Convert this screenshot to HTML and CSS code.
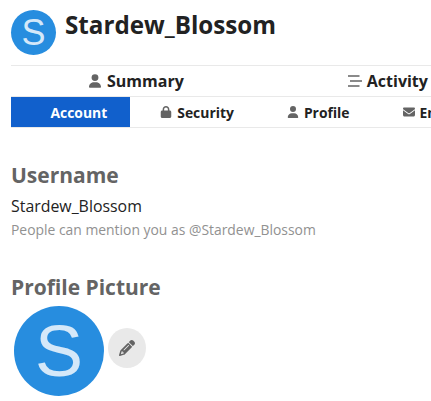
FILE: index.html
```
<!DOCTYPE html>
<html lang="en">
<head>
    <meta charset="UTF-8">
    <title>Stardew_Blossom - Account</title>
    <link rel="stylesheet" href="styles.css">
</head>
<body>
    <header class="user-header">
        <div class="avatar avatar-small"><span>S</span></div>
        <h1>Stardew_Blossom</h1>
    </header>
    <nav class="nav nav-primary">
        <a class="nav-item">
            <svg class="icon" viewBox="0 0 448 512"><path d="M224 256A128 128 0 1 0 224 0a128 128 0 1 0 0 256zm-45.700 48C79.800 304 0 383.800 0 482.300C0 498.700 13.300 512 29.700 512H418.300c16.400 0 29.700-13.300 29.700-29.700C448 383.800 368.200 304 269.700 304H178.300z"/></svg>
            <span>Summary</span>
        </a>
        <a class="nav-item">
            <svg class="icon icon-wide" viewBox="0 0 14 12"><path d="M0 .3h11.500v1.400H0zM2 5.300h12v1.400H2zM0 10.300h11.500v1.400H0z"/></svg>
            <span>Activity</span>
        </a>
    </nav>
    <nav class="nav nav-secondary">
        <a class="nav-item active">
            <svg class="icon" viewBox="0 0 448 512"></svg>
            <span>Account</span>
        </a>
        <a class="nav-item">
            <svg class="icon" viewBox="0 0 448 512"><path d="M144 144v48H304V144c0-44.200-35.800-80-80-80s-80 35.800-80 80zM80 192V144C80 64.500 144.500 0 224 0s144 64.500 144 144v48h16c35.300 0 64 28.700 64 64V448c0 35.300-28.700 64-64 64H64c-35.300 0-64-28.700-64-64V256c0-35.300 28.700-64 64-64H80z"/></svg>
            <span>Security</span>
        </a>
        <a class="nav-item">
            <svg class="icon" viewBox="0 0 448 512"><path d="M224 256A128 128 0 1 0 224 0a128 128 0 1 0 0 256zm-45.700 48C79.800 304 0 383.800 0 482.300C0 498.700 13.300 512 29.700 512H418.300c16.400 0 29.700-13.300 29.700-29.700C448 383.800 368.200 304 269.700 304H178.300z"/></svg>
            <span>Profile</span>
        </a>
        <a class="nav-item">
            <svg class="icon" viewBox="0 0 512 512"><path d="M48 64C21.500 64 0 85.500 0 112c0 15.100 7.100 29.300 19.200 38.400L236.800 313.600c11.400 8.500 27 8.500 38.400 0L492.800 150.400c12.100-9.100 19.200-23.300 19.200-38.400c0-26.500-21.500-48-48-48H48zM0 176V384c0 35.300 28.700 64 64 64H448c35.300 0 64-28.700 64-64V176L294.400 339.200c-22.800 17.100-54 17.100-76.800 0L0 176z"/></svg>
            <span>Emails</span>
        </a>
    </nav>
    <main class="preferences">
        <section class="username">
            <h2>Username</h2>
            <p class="value">Stardew_Blossom</p>
            <p class="hint">People can mention you as @Stardew_Blossom</p>
        </section>
        <section class="picture">
            <h2>Profile Picture</h2>
            <div class="picture-row">
                <div class="avatar avatar-large"><span>S</span></div>
                <button class="edit-button" aria-label="Edit">
                    <svg class="pencil" viewBox="0 0 512 512"><path d="M410.300 231l11.300-11.300-33.900-33.900-62.100-62.100L291.700 89.800l-11.300 11.300-22.600 22.600L58.600 322.900c-10.400 10.400-18 23.300-22.200 37.400L1 480.700c-2.500 8.400-.2 17.500 6.100 23.700s15.300 8.500 23.700 6.100l120.300-35.400c14.100-4.200 27-11.800 37.400-22.200L387.700 253.700 410.300 231zM160 399.400l-9.100 22.700c-4 3.100-8.500 5.400-13.300 6.900L59.400 452l23-78.100c1.400-4.900 3.800-9.400 6.900-13.300l22.700-9.100v32c0 8.800 7.200 16 16 16h32zM362.700 18.700L348.300 33.200 325.700 55.800 314.300 67.100l33.900 33.900 62.100 62.100 33.900 33.900 11.300-11.300 22.600-22.600 14.500-14.500c25-25 25-65.500 0-90.500L453.300 18.700c-25-25-65.500-25-90.500 0zm-47.400 168l-144 144c-6.200 6.200-16.400 6.200-22.600 0s-6.200-16.400 0-22.600l144-144c6.200-6.200 16.400-6.200 22.600 0s6.200 16.400 0 22.600z"/></svg>
                </button>
            </div>
        </section>
    </main>
</body>
</html>
```
FILE: styles.css
```
body {
    margin: 0;
    padding: 10px 0 0 11px;
    font-family: "Open Sans", sans-serif;
    font-size: 15px;
    color: #222;
    background-color: #fff;
    overflow: hidden;
}
h1, h2, p {
    margin: 0;
}
.user-header {
    display: flex;
    gap: 9px;
    height: 55px;
}
h1 {
    font-size: 24.2px;
    line-height: 30px;
}
.avatar {
    display: flex;
    justify-content: center;
    align-items: center;
    flex: none;
    border-radius: 50%;
    background-color: #278ddf;
    color: #d4e8f9;
    font-family: "Liberation Sans", sans-serif;
    line-height: 1;
}
.avatar-small {
    width: 45px;
    height: 45px;
    font-size: 36px;
}
.avatar-large {
    width: 90px;
    height: 90px;
    font-size: 72px;
}
.nav {
    display: flex;
    box-sizing: border-box;
    overflow: hidden;
    border-top: 1px solid #e9e9e9;
    font-weight: bold;
}
.nav-item {
    display: flex;
    align-items: center;
    flex: none;
    white-space: nowrap;
}
.icon {
    width: 12px;
    height: 12px;
    fill: #646464;
}
.nav-primary {
    height: 31px;
    padding-left: 78px;
    gap: 164px;
    font-size: 16px;
}
.nav-primary .nav-item {
    gap: 6px;
}
.nav-primary .icon {
    height: 14px;
}
.nav-primary .icon-wide {
    width: 14px;
    height: 12px;
    margin-right: -1px;
}
.nav-secondary {
    height: 32px;
    border-bottom: 1px solid #e9e9e9;
    font-size: 13.9px;
}
.nav-secondary .nav-item {
    gap: 5px;
    padding: 0 23px 0 22.500px;
}
.nav-secondary .nav-item + .nav-item {
    padding-left: 30px;
}
.nav-secondary .active {
    background-color: #1160cc;
    color: #fff;
}
h2 {
    font-size: 21px;
    line-height: 26px;
    color: #646464;
}
.username {
    padding-top: 34px;
}
.value {
    margin-top: 6px;
    font-size: 15.9px;
    line-height: 24px;
}
.hint {
    margin-top: 1px;
    font-size: 13.9px;
    line-height: 22px;
    color: #919191;
}
.picture {
    padding-top: 33px;
}
.picture-row {
    display: flex;
    align-items: center;
    gap: 4px;
    padding: 6px 0 0 3px;
}
.edit-button {
    display: flex;
    justify-content: center;
    align-items: center;
    width: 38px;
    height: 40px;
    margin-bottom: 6px;
    padding: 0;
    border: none;
    border-radius: 50%;
    background-color: #e9e9e9;
}
.pencil {
    width: 16px;
    height: 16px;
    fill: #646464;
}
```
